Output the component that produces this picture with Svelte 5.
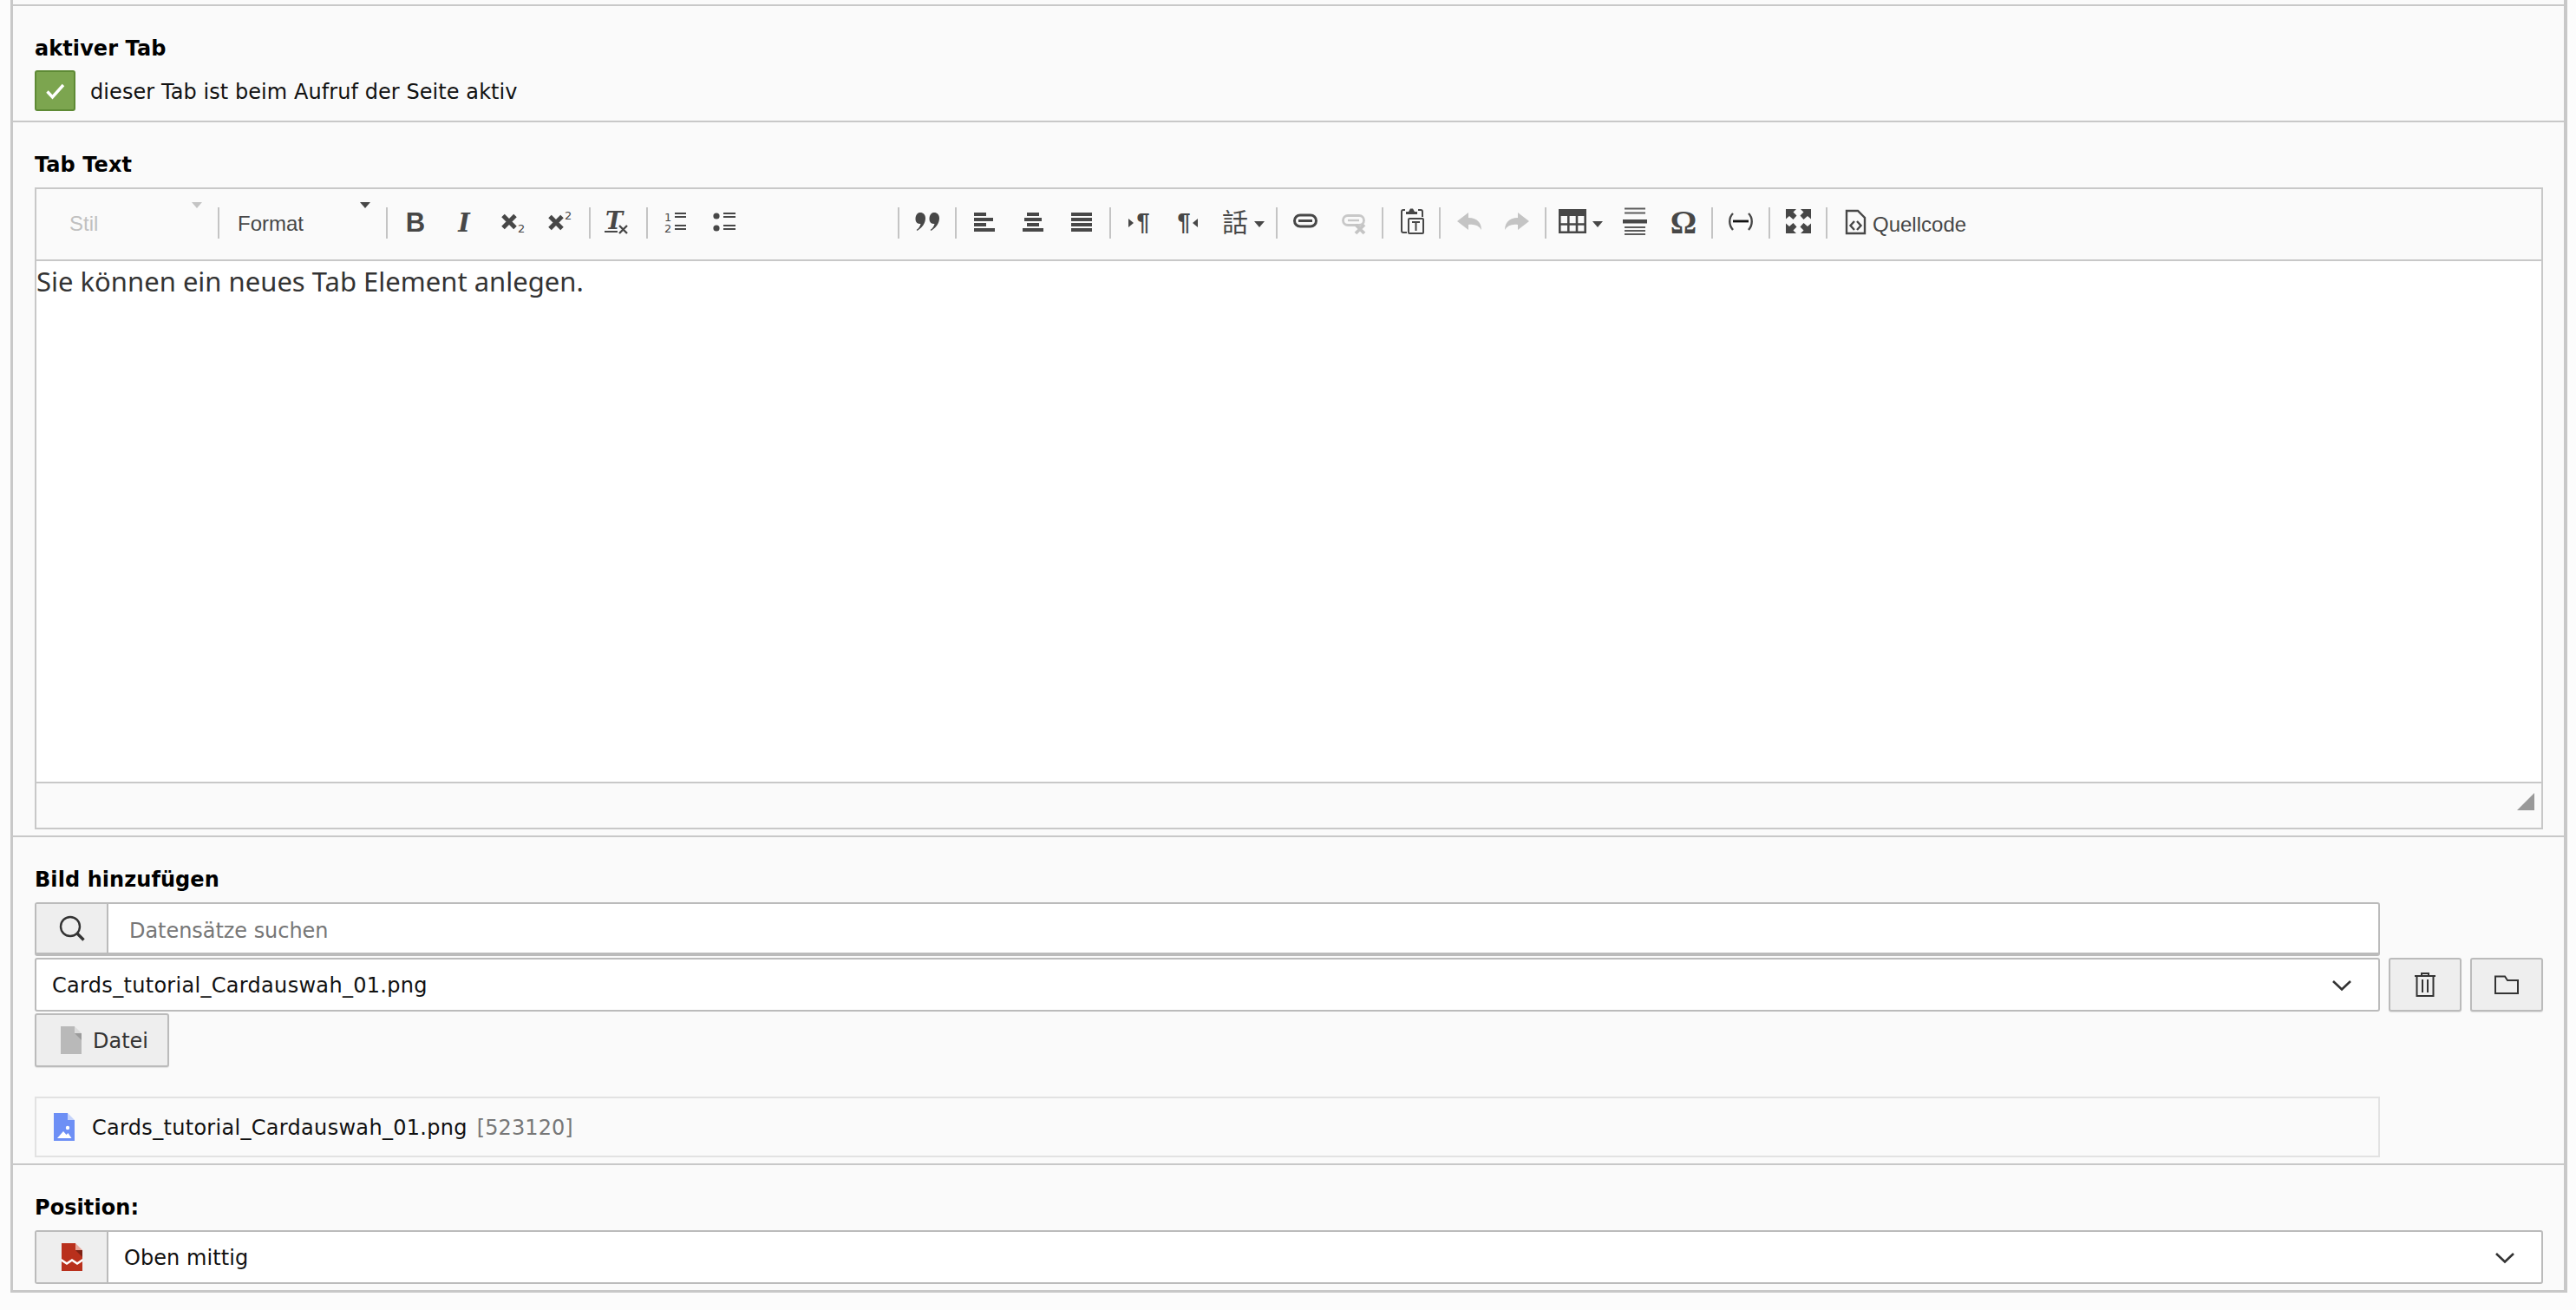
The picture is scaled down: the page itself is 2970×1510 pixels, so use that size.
<script>
  const label = "dieser Tab ist beim Aufruf der Seite aktiv";
</script>

{#snippet chevron()}
  <svg class="chevron" width="24" height="14" viewBox="0 0 24 14"><path d="M2 2l10 9.5L22 2" fill="none" stroke="#333" stroke-width="2.6"/></svg>
{/snippet}

{#snippet caret(disabled)}
  <svg class="caret" class:off={disabled} width="12" height="7" viewBox="0 0 12 7"><path d="M0 0h12L6 7z"/></svg>
{/snippet}

<div class="panel">
  <section class="first">
    <div class="label">aktiver Tab</div>
    <div class="check-row">
      <span class="checkbox">
        <svg width="24" height="20" viewBox="0 0 24 20"><path d="M2.5 10.5l6 6.5L21 3" fill="none" stroke="#fff" stroke-width="3.4"/></svg>
      </span>
      <span class="txt">{label}</span>
    </div>
  </section>

  <section>
    <div class="label">Tab Text</div>
    <div class="editor">
      <div class="toolbar">
        <div class="combo stil">Stil{@render caret(true)}</div>
        <i class="sep"></i>
        <div class="combo format">Format{@render caret(false)}</div>
        <i class="sep"></i>
        <div class="group">
          <span class="btn"><svg width="32" height="32" viewBox="0 0 32 32"><text x="16" y="28" text-anchor="middle" class="g-bold">B</text></svg></span>
          <span class="btn"><svg width="32" height="32" viewBox="0 0 32 32"><text x="16" y="28" text-anchor="middle" class="g-ital">I</text></svg></span>
          <span class="btn"><svg width="32" height="32" viewBox="0 0 32 32"><path d="M5 9.500l14 14M19 9.500l-14 14" stroke="#474747" stroke-width="5"/><text x="22" y="29" class="g-small">2</text></svg></span>
          <span class="btn"><svg width="32" height="32" viewBox="0 0 32 32"><path d="M3 10.500l14 14M17 10.500l-14 14" stroke="#474747" stroke-width="5"/><text x="20" y="14" class="g-small">2</text></svg></span>
        </div>
        <i class="sep"></i>
        <div class="group">
          <span class="btn"><svg width="32" height="32" viewBox="0 0 32 32"><text x="11" y="25" text-anchor="middle" class="g-tx">T</text><path d="M0 28h15" stroke="#474747" stroke-width="2"/><path d="M17 21l9 9M26 21l-9 9" stroke="#474747" stroke-width="2.400"/></svg></span>
        </div>
        <i class="sep"></i>
        <div class="group lists">
          <span class="btn"><svg width="32" height="32" viewBox="0 0 32 32"><text x="3" y="16" class="g-small">1</text><text x="3" y="29" class="g-small">2</text><path d="M15 7h13M15 11h13M15 21h13M15 25h13" stroke="#474747" stroke-width="2"/></svg></span>
          <span class="btn"><svg width="32" height="32" viewBox="0 0 32 32"><circle cx="7" cy="10" r="3.600" fill="#474747"/><circle cx="7" cy="24" r="3.600" fill="#474747"/><path d="M15 7h14M15 11h14M15 21h14M15 25h14" stroke="#474747" stroke-width="2"/></svg></span>
        </div>
        <i class="sep"></i>
        <div class="group">
          <span class="btn"><svg width="32" height="32" viewBox="0 0 32 32"><path d="M8 6c3.500 0 6 2.500 6 6.500 0 6-4 11-9.500 14.500l-.8-1c2.800-2 4.300-4.500 4.800-7-3.500.5-6-1.800-6-5.500C2.500 8.500 5 6 8 6zM24 6c3.500 0 6 2.500 6 6.500 0 6-4 11-9.500 14.500l-.8-1c2.800-2 4.300-4.500 4.800-7-3.500.5-6-1.800-6-5.500C18.500 8.500 21 6 24 6z" fill="#474747"/></svg></span>
        </div>
        <i class="sep"></i>
        <div class="group">
          <span class="btn"><svg width="32" height="32" viewBox="0 0 32 32" fill="#474747"><path d="M4 6h14v4H4zM4 12h22v4H4zM4 18h14v4H4zM4 24h24v4H4z"/></svg></span>
          <span class="btn"><svg width="32" height="32" viewBox="0 0 32 32" fill="#474747"><path d="M9 6h14v4H9zM6 12h20v4H6zM9 18h14v4H9zM4 24h24v4H4z"/></svg></span>
          <span class="btn"><svg width="32" height="32" viewBox="0 0 32 32" fill="#474747"><path d="M4 6h24v4H4zM4 12h24v4H4zM4 18h24v4H4zM4 24h24v4H4z"/></svg></span>
        </div>
        <i class="sep"></i>
        <div class="group">
          <span class="btn"><svg width="32" height="32" viewBox="0 0 32 32"><path d="M4 13l6 5-6 5z" fill="#474747"/><text x="21" y="26" text-anchor="middle" class="g-para">¶</text></svg></span>
          <span class="btn"><svg width="32" height="32" viewBox="0 0 32 32"><path d="M28 13l-6 5 6 5z" fill="#474747"/><text x="12" y="26" text-anchor="middle" class="g-para">¶</text></svg></span>
          <span class="btn lang"><svg width="34" height="32" viewBox="0 0 34 32"><text x="17" y="28" text-anchor="middle" class="g-cjk">話</text></svg>{@render caret(false)}</span>
        </div>
        <i class="sep"></i>
        <div class="group">
          <span class="btn"><svg width="32" height="32" viewBox="0 0 32 32"><rect x="3.500" y="9" width="25" height="13" rx="6.500" fill="none" stroke="#474747" stroke-width="3"/><path d="M8 15.500h16" stroke="#474747" stroke-width="3"/></svg></span>
          <span class="btn"><svg width="32" height="32" viewBox="0 0 32 32"><rect x="3.500" y="9.500" width="24" height="11" rx="5.500" fill="none" stroke="#c8c8c8" stroke-width="2.800"/><path d="M9 15h13" stroke="#c8c8c8" stroke-width="2.400"/><path d="M18 20l10 10M28 20L18 30" stroke="#c4c4c4" stroke-width="3.800"/></svg></span>
        </div>
        <i class="sep"></i>
        <div class="group">
          <span class="btn"><svg width="32" height="32" viewBox="0 0 32 32"><path d="M9 3H7a2 2 0 00-2 2v22a2 2 0 002 2h4M24 3h3a2 2 0 012 2v6" fill="none" stroke="#474747" stroke-width="2"/><path d="M10 5h3l2-3.500h3l2 3.500h3v3H10z" fill="#474747"/><rect x="13" y="13" width="17" height="17" rx="1" fill="#fafafa" stroke="#474747" stroke-width="2"/><path d="M17 17h9M21.500 17v10" stroke="#474747" stroke-width="2"/></svg></span>
        </div>
        <i class="sep"></i>
        <div class="group">
          <span class="btn"><svg width="32" height="32" viewBox="0 0 32 32"><path d="M3 16L16 6v6c9 0 15 5 15 14-3-5-8-7-15-6v6z" fill="#c4c4c4"/></svg></span>
          <span class="btn"><svg width="32" height="32" viewBox="0 0 32 32"><path d="M30 16L17 6v6C8 12 2 17 2 26c3-5 8-7 15-6v6z" fill="#c4c4c4"/></svg></span>
        </div>
        <i class="sep"></i>
        <div class="group">
          <span class="btn lang"><svg width="34" height="32" viewBox="0 0 34 32"><path d="M0 2h32v8H0z" fill="#474747"/><path d="M1.300 9v19.700h29.400V9M11.300 9v20M21 9v20M1 19.500h30" fill="none" stroke="#474747" stroke-width="2.600"/></svg>{@render caret(false)}</span>
          <span class="btn"><svg width="32" height="32" viewBox="0 0 32 32"><path d="M4 1.500h24M4 6.500h24M4 23h24M4 27h24M4 31h24" stroke="#5c5c5c" stroke-width="2"/><path d="M2 14h28v4.500H2z" fill="#474747"/></svg></span>
          <span class="btn"><svg width="32" height="32" viewBox="0 0 32 32"><text x="16" y="30" text-anchor="middle" class="g-omega">Ω</text></svg></span>
        </div>
        <i class="sep"></i>
        <div class="group">
          <span class="btn"><svg width="32" height="32" viewBox="0 0 32 32"><path d="M7 7c-5 5-5 13 0 19M25 7c5 5 5 13 0 19" fill="none" stroke="#474747" stroke-width="2.400"/><path d="M7 16h18" stroke="#111" stroke-width="2.800"/></svg></span>
        </div>
        <i class="sep"></i>
        <div class="group">
          <span class="btn"><svg width="32" height="32" viewBox="0 0 32 32" fill="#474747"><path d="M2 2h12l-3.500 3.500 4 4-4 4.500-4.500-4L2 13.500zM31 2H19l3.500 3.500-4 4 4 4.500 4.500-4 4 3.500zM2 30h12l-3.500-3.500 4-4-4-4.500-4.500 4L2 18.500zM31 30H19l3.500-3.500-4-4 4-4.500 4.500 4 4-3.500z"/></svg></span>
        </div>
        <i class="sep"></i>
        <div class="source">
          <svg width="32" height="32" viewBox="0 0 32 32"><path d="M6 4h13l8 8v18H6z" fill="none" stroke="#474747" stroke-width="2.400"/><path d="M15 16l-4.500 5 4.500 5M18 16l4.500 5-4.500 5" fill="none" stroke="#474747" stroke-width="2.400"/></svg>
          <span>Quellcode</span>
        </div>
      </div>
      <div class="content">Sie können ein neues Tab Element anlegen.</div>
      <div class="footer"><span class="resize"></span></div>
    </div>
  </section>

  <section>
    <div class="label">Bild hinzufügen</div>
    <div class="relation">
      <div class="main">
        <div class="field search">
          <span class="addon">
            <svg width="30" height="30" viewBox="0 0 30 30"><circle cx="13" cy="13" r="11" fill="none" stroke="#333" stroke-width="2.400"/><path d="M21 21l7.500 7.500" stroke="#333" stroke-width="3.400"/></svg>
          </span>
          <input placeholder="Datensätze suchen" readonly />
        </div>
        <div class="field select">
          <span class="name txt">Cards_tutorial_Cardauswah_01.png</span>
          {@render chevron()}
        </div>
        <button class="file-btn">
          <svg width="24" height="32" viewBox="0 0 24 32"><path d="M0 0h16v8h8v24H0z" fill="#b9b9b9"/><path d="M16 0l8 8h-8z" fill="#dcdcdc"/><path d="M16 8h8v8z" fill="#9b9b9b"/></svg>
          <span class="txt">Datei</span>
        </button>
        <div class="item">
          <svg width="24" height="32" viewBox="0 0 24 32"><path d="M0 0h16v8h8v24H0z" fill="#6d8ff5"/><path d="M16 0l8 8h-8z" fill="#c5d3fb"/><path d="M4 29l7-8 3.500 4 2-2 4 6z" fill="#fff"/><circle cx="16" cy="17" r="2.200" fill="#fff"/></svg>
          <span class="name txt">Cards_tutorial_Cardauswah_01.png</span>
          <span class="uid txt">[523120]</span>
        </div>
      </div>
      <div class="side">
        <button class="side-btn">
          <svg width="26" height="30" viewBox="0 0 26 30" fill="none" stroke="#333" stroke-width="2"><path d="M1 5h24M9 5V2h8v3M3.500 5v23h19V5M10 9v15M16 9v15"/></svg>
        </button>
        <button class="side-btn">
          <svg width="30" height="22" viewBox="0 0 30 22" fill="none" stroke="#333" stroke-width="2"><path d="M2 1.500h11l3 4.500h12v15H2z"/></svg>
        </button>
      </div>
    </div>
  </section>

  <section>
    <div class="label">Position:</div>
    <div class="field select position">
      <span class="addon">
        <svg width="24" height="32" viewBox="0 0 24 32"><path d="M0 0h16v8h8v24H0z" fill="#b9301c"/><path d="M16 0l8 8h-8z" fill="#e6a497"/><path d="M16 8h8v8z" fill="#7e2114"/><path d="M0 18l6 4 6-4 6 4 6-4v3l-6 4-6-4-6 4-6-4z" fill="#fff"/></svg>
      </span>
      <span class="value txt">Oben mittig</span>
      {@render chevron()}
    </div>
  </section>
</div>

<style>
  :global(body) {
    background: #fcfcfc;
  }
  .panel {
    box-sizing: border-box;
    width: 2948px;
    height: 1490px;
    margin: 0 0 0 12px;
    padding-top: 5px;
    background: #fafafa;
    border: solid #c8c8c8;
    border-width: 0 4px 3px 3px;
    box-shadow: 0 4px 0 #d8d8d8;
    font: 24px/24px "DejaVu Sans", Verdana, sans-serif;
    letter-spacing: 0.07px;
    color: #111;
  }
  section {
    border-top: 2px solid #c8c8c8;
    padding: 37px 24px 7px 25px;
  }
  section.first {
    padding-bottom: 11px;
  }
  .label {
    font-weight: 700;
    color: #000;
    line-height: 25px;
    margin-bottom: 13px;
  }
  .first .label {
    margin-bottom: 12px;
  }
  .txt {
    padding-top: 2px;
  }
  .check-row {
    display: flex;
    align-items: center;
    gap: 17px;
  }
  .checkbox {
    box-sizing: border-box;
    width: 47px;
    height: 47px;
    display: flex;
    align-items: center;
    justify-content: center;
    background: #7ca54f;
    border: 2px solid #5e8a35;
    border-radius: 3px;
  }

  .editor {
    border: 2px solid #c8c8c8;
    background: #fafafa;
  }
  .toolbar {
    box-sizing: border-box;
    height: 83px;
    padding-top: 21px;
    display: flex;
    align-items: flex-start;
    border-bottom: 2px solid #c8c8c8;
    font-family: "Liberation Sans", Arial, sans-serif;
    letter-spacing: 0;
    color: #474747;
  }
  svg {
    overflow: visible;
    flex: none;
  }
  .sep {
    flex: none;
    width: 2px;
    height: 36px;
    background: #c4c4c4;
  }
  .combo {
    position: relative;
    box-sizing: border-box;
    height: 36px;
    line-height: 38px;
  }
  .combo .caret {
    position: absolute;
    top: -6px;
    right: 18px;
  }
  .stil {
    width: 209px;
    padding-left: 38px;
    color: #c0c0c0;
  }
  .format {
    width: 192px;
    padding-left: 21px;
  }
  .caret {
    fill: #474747;
    flex: none;
  }
  .caret.off {
    fill: #c4c4c4;
  }
  .group {
    display: flex;
    margin: 0 4px;
  }
  .group.lists {
    margin-right: 172px;
  }
  .btn {
    width: 56px;
    height: 36px;
    display: flex;
    justify-content: center;
  }
  .btn.lang {
    box-sizing: border-box;
    width: 70px;
    padding-left: 10px;
    gap: 5px;
    justify-content: flex-start;
    align-items: flex-start;
  }
  .btn.lang .caret {
    margin-top: 16px;
  }
  .source {
    display: flex;
    align-items: flex-start;
    gap: 4px;
    margin-left: 16px;
    line-height: 40px;
  }
  text {
    fill: #474747;
  }
  .g-bold {
    font: 700 31px "Liberation Sans", sans-serif;
  }
  .g-ital {
    font: italic 700 29px "DejaVu Serif", serif;
  }
  .g-tx {
    font: italic 700 27px "DejaVu Serif", serif;
  }
  .g-small {
    font: 400 13px "DejaVu Sans", sans-serif;
  }
  .g-para {
    font: 700 27px "Liberation Sans", sans-serif;
  }
  .g-cjk {
    font: 400 30px "Noto Sans CJK TC", sans-serif;
  }
  .g-omega {
    font: 700 38px "Liberation Serif", serif;
  }
  .content {
    box-sizing: border-box;
    height: 600px;
    padding-top: 6px;
    background: #fff;
    font: 31px/34px "Noto Sans", sans-serif;
    letter-spacing: 0;
    color: #333;
  }
  .footer {
    position: relative;
    height: 51px;
    border-top: 2px solid #c8c8c8;
  }
  .resize {
    position: absolute;
    right: 8px;
    top: 11px;
    width: 0;
    height: 0;
    border-left: 20px solid transparent;
    border-bottom: 20px solid #999;
  }

  .relation {
    display: flex;
    align-items: flex-start;
    gap: 10px;
  }
  .main {
    flex: 1;
    display: flex;
    flex-direction: column;
    align-items: flex-start;
  }
  .field {
    box-sizing: border-box;
    width: 100%;
    height: 62px;
    display: flex;
    align-items: center;
    background: #fff;
    border: 2px solid #bbb;
    border-radius: 3px;
  }
  .search {
    border-bottom-width: 4px;
    margin-bottom: 2px;
  }
  .addon {
    flex: none;
    align-self: stretch;
    width: 81px;
    display: flex;
    align-items: center;
    justify-content: center;
    background: #eee;
    border-right: 2px solid #bbb;
    padding-top: 0;
  }
  input {
    flex: 1;
    border: 0;
    outline: 0;
    padding: 5px 0 0 24px;
    background: transparent;
    font: inherit;
    letter-spacing: -0.05px;
  }
  input::placeholder {
    color: #777;
    opacity: 1;
  }
  .select {
    justify-content: space-between;
    padding: 0 30px 0 18px;
    margin-bottom: 2px;
  }
  .select .chevron {
    margin-top: 1px;
  }
  .name {
    letter-spacing: 0.3px;
  }
  .position {
    margin: 0;
    padding: 0 30px 0 0;
  }
  .position .value {
    flex: 1;
    padding-left: 18px;
  }
  button {
    box-sizing: border-box;
    height: 62px;
    display: flex;
    align-items: center;
    justify-content: center;
    background: #eee;
    border: 2px solid #bbb;
    border-radius: 3px;
    box-shadow: 0 1px 1px rgba(0, 0, 0, 0.1);
    color: #333;
    font: inherit;
    padding: 0;
  }
  .file-btn {
    width: 155px;
    gap: 13px;
    justify-content: flex-start;
    padding-left: 28px;
  }
  .item {
    box-sizing: border-box;
    width: 100%;
    height: 70px;
    margin-top: 34px;
    padding-left: 20px;
    display: flex;
    align-items: center;
    gap: 20px;
    border: 2px solid #e2e2e2;
  }
  .item .uid {
    margin-left: -9px;
    color: #777;
  }
  .side {
    display: flex;
    gap: 10px;
    padding-top: 64px;
  }
  .side-btn {
    width: 84px;
  }
</style>
